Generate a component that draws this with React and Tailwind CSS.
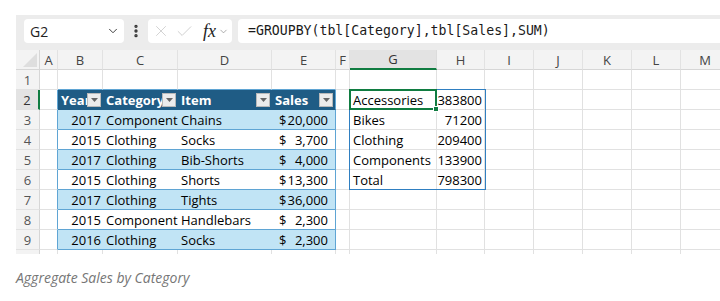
import React from "react";
import { ChevronDown, X, Check, EllipsisVertical } from "lucide-react";

const COLS = ["", "A", "B", "C", "D", "E", "F", "G", "H", "I", "J", "K", "L", "M"];

const TABLE = [
  ["2017", "Component", "Chains", "20,000"],
  ["2015", "Clothing", "Socks", "3,700"],
  ["2017", "Clothing", "Bib-Shorts", "4,000"],
  ["2015", "Clothing", "Shorts", "13,300"],
  ["2017", "Clothing", "Tights", "36,000"],
  ["2015", "Component", "Handlebars", "2,300"],
  ["2016", "Clothing", "Socks", "2,300"],
];

const SPILL = [
  ["Accessories", "383800"],
  ["Bikes", "71200"],
  ["Clothing", "209400"],
  ["Components", "133900"],
  ["Total", "798300"],
];

const Dropdown = () => (
  <span className="flex-none w-[14px] h-[14px] mr-[2px] bg-[#ececec] border border-[#b9b9b9] flex items-center justify-center">
    <svg width="7" height="4" viewBox="0 0 7 4">
      <path d="M0 0h7L3.5 4z" fill="#666" />
    </svg>
  </span>
);

const ColumnHeaders = () =>
  COLS.map((c, i) => {
    if (i === 0)
      return (
        <div key="corner" className="h-5 bg-[#f3f3f3] border-r border-b border-[#d6d6d6] flex items-end justify-end p-[2px]">
          <svg width="14" height="14" viewBox="0 0 14 14">
            <path d="M14 0V14H0z" fill="#dedede" />
          </svg>
        </div>
      );
    if (c === "G")
      return (
        <div key={c} className="h-5 bg-[#e3e3e3] border-r border-[#dcdcdc] border-b-2 border-b-[#107c41] text-center text-[13px] leading-[19px] text-[#333]">
          {c}
        </div>
      );
    return (
      <div key={c} className="h-5 bg-[#f3f3f3] border-r border-b border-r-[#e2e2e2] border-b-[#d6d6d6] text-center text-[13px] leading-5 text-[#444]">
        {c}
      </div>
    );
  });

const RowHeader = ({ n }) =>
  n === 2 ? (
    <div className="h-5 bg-[#e3e3e3] border-b border-b-[#e2e2e2] border-r-2 border-r-[#107c41] text-center text-[13px] leading-5 text-[#333]">
      {n}
    </div>
  ) : (
    <div className="h-5 bg-[#f3f3f3] border-b border-r border-b-[#e2e2e2] border-r-[#d6d6d6] text-center text-[13px] leading-5 text-[#555]">
      {n}
    </div>
  );

const Empty = ({ tableLeft }) => (
  <div
    className={`h-5 border-b border-r border-b-[#e1e1e1] ${
      tableLeft ? "border-r-[#5fa5d4]" : "border-r-[#e1e1e1]"
    }`}
  />
);

const TableHeaderCell = ({ label, last }) => (
  <div
    className={`h-5 bg-[#1f5c85] border-b border-b-[#1f5c85] flex items-center overflow-hidden ${
      last ? "border-r border-r-[#5fa5d4]" : ""
    }`}
  >
    <span className="flex-1 min-w-0 overflow-hidden whitespace-nowrap pl-[3px] text-[13px] font-bold text-white leading-5">
      {label}
    </span>
    <Dropdown />
  </div>
);

const bandClass = (i) => (i % 2 === 0 ? "bg-[#c1e4f5]" : "bg-white");

const TableRow = ({ row, i }) => {
  const band = bandClass(i);
  return (
    <>
      <div className={`h-5 ${band} border-b border-b-[#5fa5d4] text-right pr-[2px] text-[13px] leading-5 whitespace-nowrap`}>
        {row[0]}
      </div>
      <div className={`h-5 ${band} border-b border-b-[#5fa5d4] pl-[3px] text-[13px] leading-5 whitespace-nowrap`}>
        {row[1]}
      </div>
      <div className={`h-5 ${band} border-b border-b-[#5fa5d4] pl-[3px] text-[13px] leading-5 whitespace-nowrap`}>
        {row[2]}
      </div>
      <div className={`h-5 ${band} border-b border-r border-[#5fa5d4] pl-[7px] pr-[7px] flex justify-between text-[13px] leading-5 whitespace-nowrap`}>
        <span>$</span>
        <span>{row[3]}</span>
      </div>
    </>
  );
};

const SpillCells = ({ r }) => {
  const item = SPILL[r - 2];
  if (!item)
    return (
      <>
        <Empty />
        <Empty />
      </>
    );
  return (
    <>
      <div className="h-5 border-b border-r border-[#e1e1e1] pl-[3px] text-[13px] leading-5 whitespace-nowrap">
        {item[0]}
      </div>
      <div className="h-5 border-b border-r border-[#e1e1e1] pr-[2px] text-right text-[13px] leading-5 whitespace-nowrap">
        {item[1]}
      </div>
    </>
  );
};

const SheetRow = ({ r }) => {
  const inTable = r >= 2 && r <= 9;
  return (
    <>
      <RowHeader n={r} />
      <Empty tableLeft={inTable} />
      {r === 2 ? (
        <>
          <TableHeaderCell label="Year" />
          <TableHeaderCell label="Category" />
          <TableHeaderCell label="Item" />
          <TableHeaderCell label="Sales" last />
        </>
      ) : inTable ? (
        <TableRow row={TABLE[r - 3]} i={r - 3} />
      ) : r === 1 ? (
        <>
          <div className="h-5 border-b border-r border-b-[#5fa5d4] border-r-[#e1e1e1]" />
          <div className="h-5 border-b border-r border-b-[#5fa5d4] border-r-[#e1e1e1]" />
          <div className="h-5 border-b border-r border-b-[#5fa5d4] border-r-[#e1e1e1]" />
          <div className="h-5 border-b border-r border-b-[#5fa5d4] border-r-[#e1e1e1]" />
        </>
      ) : (
        <>
          <Empty />
          <Empty />
          <Empty />
          <Empty />
        </>
      )}
      <Empty />
      <SpillCells r={r} />
      <Empty />
      <Empty />
      <Empty />
      <Empty />
      <Empty />
    </>
  );
};

export default function App() {
  return (
    <div className="bg-white w-[720px] h-[301px] overflow-hidden pt-[15px] pl-4 font-['Open_Sans',sans-serif] text-black">
      {/* formula bar */}
      <div className="h-[35px] bg-[#ececec] flex items-start pt-1 pl-2 gap-[6px]">
        <div className="w-[100px] h-6 bg-white rounded-[4px] flex items-center justify-between pl-[6px] pr-[4px]">
          <span className="text-[14px] text-[#222]">G2</span>
          <ChevronDown size={14} strokeWidth={1.6} color="#333" />
        </div>
        <div className="h-6 flex items-center -mx-[2px]">
          <EllipsisVertical size={16} strokeWidth={3} color="#333" />
        </div>
        <div className="w-[84px] h-6 bg-white rounded-[4px] flex items-center pl-[4px] gap-[5px]">
          <X size={18} strokeWidth={1} color="#c4c4c4" />
          <Check size={19} strokeWidth={1} color="#c4c4c4" />
          <span className="font-['Liberation_Serif',serif] italic text-[18px] leading-none text-[#222] ml-[4px]">fx</span>
          <ChevronDown size={11} strokeWidth={1.5} color="#888" className="-ml-[3px]" />
        </div>
        <div className="flex-1 h-6 bg-white rounded-l-[4px] flex items-center pl-[10px] font-['DejaVu_Sans_Mono',monospace] text-[13.2px] text-[#1a1a1a] whitespace-nowrap">
          =GROUPBY(tbl[Category],tbl[Sales],SUM)
        </div>
      </div>

      {/* grid */}
      <div className="relative h-[204px] overflow-hidden">
        <div className="grid grid-cols-[24px_18px_45px_75px_94px_64px_14px_87px_48px_49px_49px_49px_49px_49px]">
          <ColumnHeaders />
          {[1, 2, 3, 4, 5, 6, 7, 8, 9, 10].map((r) => (
            <SheetRow key={r} r={r} />
          ))}
        </div>
        {/* spill range border */}
        <div className="absolute left-[333px] top-[39px] w-[137px] h-[101px] border border-[#2f7fc1] pointer-events-none" />
        {/* active cell */}
        <div className="absolute left-[333px] top-[39px] w-[88px] h-[21px] border-2 border-[#107c41] pointer-events-none">
          <div className="absolute -right-[4px] -bottom-[4px] w-[6px] h-[6px] bg-[#107c41] border border-white" />
        </div>
      </div>

      <div className="mt-[14px] text-[14px] leading-5 italic text-[#767676]">Aggregate Sales by Category</div>
    </div>
  );
}
